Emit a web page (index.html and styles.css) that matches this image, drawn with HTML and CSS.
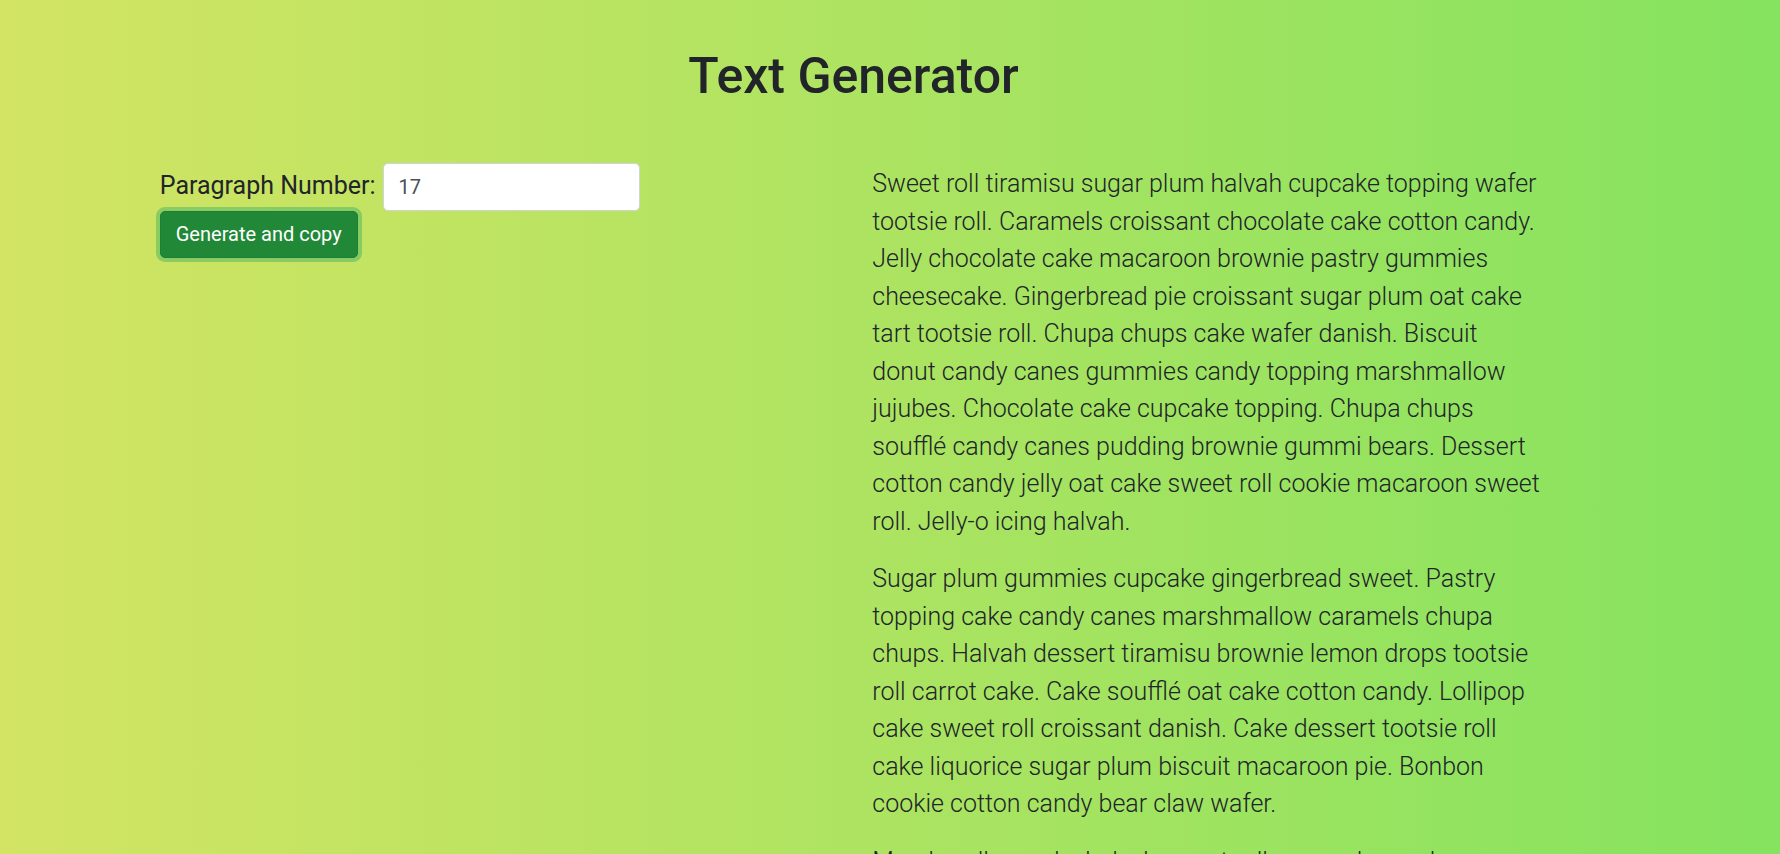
FILE: index.html
```html
<!DOCTYPE html>
<html lang="en">
<head>
<meta charset="utf-8">
<title>Text Generator</title>
<link rel="stylesheet" href="styles.css">
</head>
<body>
<div class="page">
  <h1 class="title">Text Generator</h1>
  <div class="row">
    <div class="col">
      <form class="gen-form">
        <div class="field">
          <label for="num" class="field-label">Paragraph Number:</label>
          <input id="num" type="number" class="field-input" value="17">
        </div>
        <button type="button" class="btn-generate">Generate and copy</button>
      </form>
    </div>
    <div class="col">
      <div class="output">
        <p>Sweet roll tiramisu sugar plum halvah cupcake topping wafer tootsie roll. Caramels croissant chocolate cake cotton candy. Jelly chocolate cake macaroon brownie pastry gummies cheesecake. Gingerbread pie croissant sugar plum oat cake tart tootsie roll. Chupa chups cake wafer danish. Biscuit donut candy canes gummies candy topping marshmallow jujubes. Chocolate cake cupcake topping. Chupa chups soufflé candy canes pudding brownie gummi bears. Dessert cotton candy jelly oat cake sweet roll cookie macaroon sweet roll. Jelly-o icing halvah.</p>
        <p>Sugar plum gummies cupcake gingerbread sweet. Pastry topping cake candy canes marshmallow caramels chupa chups. Halvah dessert tiramisu brownie lemon drops tootsie roll carrot cake. Cake soufflé oat cake cotton candy. Lollipop cake sweet roll croissant danish. Cake dessert tootsie roll cake liquorice sugar plum biscuit macaroon pie. Bonbon cookie cotton candy bear claw wafer.</p>
        <p>Marshmallow cake halvah sweet roll caramels candy chocolate bar cupcake. Tiramisu jelly beans gummi bears dessert lollipop. Pudding cookie wafer muffin sugar plum brownie jelly.</p>
        <p>Cupcake ipsum dolor sit amet liquorice. Donut bonbon halvah chocolate cake pastry tart. Gummies candy canes jujubes icing soufflé toffee.</p>
      </div>
    </div>
  </div>
</div>
</body>
</html>
```
FILE: styles.css
```css
html, body {
  margin: 0;
}

body {
  font-family: Roboto, "Liberation Sans", sans-serif;
  color: #212529;
  background: linear-gradient(90deg, #d3e463 0%, #85e35f 100%);
  min-height: 100vh;
}

.page {
  box-sizing: border-box;
  width: 1425px;
  margin-left: 141px;
  padding: 46px 18.75px 0;
}

.title {
  margin: 0 0 57px;
  text-align: center;
  font-size: 50px;
  font-weight: 500;
  line-height: 60px;
}

.row {
  display: grid;
  grid-template-columns: 1fr 1fr;
  column-gap: 37.5px;
}

.gen-form {
  margin: 0;
}

.field {
  display: flex;
  align-items: baseline;
  gap: 7px;
}

.field-label {
  font-size: 25px;
  line-height: 37.5px;
}

.field-input {
  box-sizing: border-box;
  width: 257px;
  height: 47.5px;
  padding: 7.5px 15px;
  font-family: inherit;
  font-size: 20px;
  line-height: 30px;
  color: #495057;
  background: #fff;
  border: 1.25px solid #ced4da;
  border-radius: 5px;
  outline: none;
  -moz-appearance: textfield;
}

.field-input::-webkit-outer-spin-button,
.field-input::-webkit-inner-spin-button {
  -webkit-appearance: none;
  margin: 0;
}

.btn-generate {
  display: block;
  margin: 0;
  padding: 7.5px 15px;
  font-family: inherit;
  font-size: 20px;
  font-weight: 400;
  line-height: 30px;
  color: #fff;
  background: #218838;
  border: 1.25px solid #1e7e34;
  border-radius: 5px;
  box-shadow: 0 0 0 4px rgba(72, 180, 97, 0.5);
  cursor: pointer;
}

.output {
  margin-top: 2px;
  padding-right: 2px;
}

.output p {
  margin: 0 0 20px;
  font-size: 25px;
  font-weight: 300;
  line-height: 37.5px;
}
```
